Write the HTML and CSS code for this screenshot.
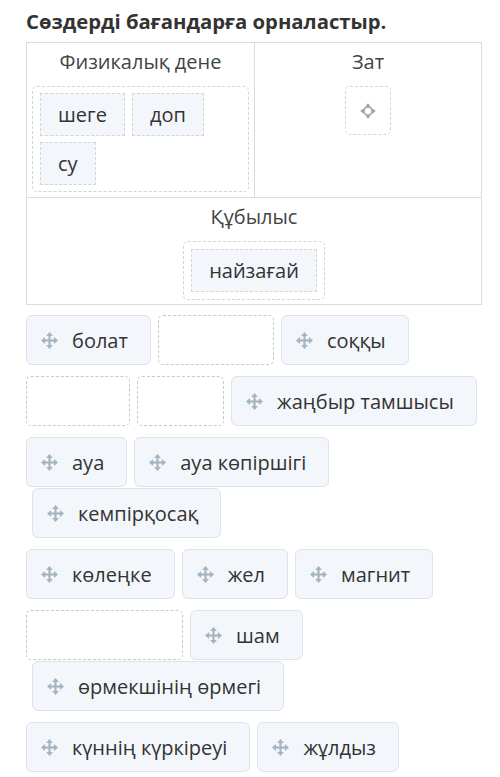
FILE: index.html
```html
<!DOCTYPE html>
<html>
<head>
<meta charset="utf-8">
<link rel="stylesheet" href="styles.css">
</head>
<body>
<svg width="0" height="0" class="defs">
  <defs>
    <symbol id="mv" viewBox="0 0 16 16">
      <rect x="7" y="3" width="2" height="10" />
      <rect x="3" y="7" width="10" height="2" />
      <polygon points="8,0 11.2,3.8 4.8,3.8" />
      <polygon points="8,16 11.2,12.2 4.8,12.2" />
      <polygon points="0,8 3.8,4.8 3.8,11.2" />
      <polygon points="16,8 12.2,4.8 12.2,11.2" />
    </symbol>
  </defs>
</svg>
<div class="page">
  <h1 class="title">Сөздерді бағандарға орналастыр.</h1>
  <div class="table">
    <div class="cell">
      <div class="head">Физикалық дене</div>
      <div class="zone zone-wide">
        <span class="placed">шеге</span>
        <span class="placed">доп</span>
        <span class="placed">су</span>
      </div>
    </div>
    <div class="cell cell-right">
      <div class="head">Зат</div>
      <div class="zone zone-empty">
        <svg class="target" viewBox="0 0 14 14">
          <circle cx="7" cy="7" r="3.6" fill="none" stroke="#9ea6ad" stroke-width="1.6"/>
          <polygon points="7,0.3 9.3,2.9 4.7,2.9" fill="#9ea6ad"/>
          <polygon points="7,13.7 9.3,11.1 4.7,11.1" fill="#9ea6ad"/>
          <polygon points="0.3,7 2.9,4.7 2.9,9.3" fill="#9ea6ad"/>
          <polygon points="13.7,7 11.1,4.7 11.1,9.3" fill="#9ea6ad"/>
        </svg>
      </div>
    </div>
    <div class="cell cell-full">
      <div class="head">Құбылыс</div>
      <div class="zone zone-center">
        <span class="placed">найзағай</span>
      </div>
    </div>
  </div>

  <div class="bank">
    <div class="row">
      <span class="item"><svg class="ic"><use href="#mv"/></svg>болат</span>
      <span class="slot w116"></span>
      <span class="item"><svg class="ic"><use href="#mv"/></svg>соққы</span>
    </div>
    <div class="row">
      <span class="slot w104"></span>
      <span class="slot w87"></span>
      <span class="item"><svg class="ic"><use href="#mv"/></svg>жаңбыр тамшысы</span>
    </div>
    <div class="row row-tight">
      <span class="item"><svg class="ic"><use href="#mv"/></svg>ауа</span>
      <span class="item"><svg class="ic"><use href="#mv"/></svg>ауа көпіршігі</span>
    </div>
    <div class="row row-indent">
      <span class="item"><svg class="ic"><use href="#mv"/></svg>кемпірқосақ</span>
    </div>
    <div class="row">
      <span class="item"><svg class="ic"><use href="#mv"/></svg>көлеңке</span>
      <span class="item"><svg class="ic"><use href="#mv"/></svg>жел</span>
      <span class="item"><svg class="ic"><use href="#mv"/></svg>магнит</span>
    </div>
    <div class="row row-tight">
      <span class="slot w157"></span>
      <span class="item"><svg class="ic"><use href="#mv"/></svg>шам</span>
    </div>
    <div class="row row-indent">
      <span class="item"><svg class="ic"><use href="#mv"/></svg>өрмекшінің өрмегі</span>
    </div>
    <div class="row">
      <span class="item"><svg class="ic"><use href="#mv"/></svg>күннің күркіреуі</span>
      <span class="item"><svg class="ic"><use href="#mv"/></svg>жұлдыз</span>
    </div>
  </div>
</div>
</body>
</html>
```

FILE: styles.css
```css
html, body {
  margin: 0;
  padding: 0;
  background: #ffffff;
}

.defs {
  position: absolute;
  width: 0;
  height: 0;
}

.page {
  padding: 8px 18px 0 26px;
  font-family: "Open Sans", "Noto Sans", sans-serif;
  color: #333;
}

.title {
  margin: 0;
  font-size: 20.3px;
  line-height: 26px;
  font-weight: 700;
  color: #333;
}

.table {
  margin-top: 8px;
  display: grid;
  grid-template-columns: 1fr 1fr;
  border: 1px solid #dcdcdc;
}

.cell {
  padding: 5px 5px 5px;
  display: flex;
  flex-direction: column;
  align-items: center;
}

.cell-right {
  border-left: 1px solid #dcdcdc;
}

.cell-full {
  grid-column: 1 / span 2;
  border-top: 1px solid #dcdcdc;
  padding-bottom: 4px;
}

.head {
  font-size: 20px;
  line-height: 27px;
  color: #444;
  margin-bottom: 11px;
}

.zone {
  border: 1px dashed #d4d4d4;
  border-radius: 5px;
  box-sizing: border-box;
}

.zone-wide {
  align-self: stretch;
  padding: 6px 7px 6px;
  display: flex;
  flex-wrap: wrap;
  gap: 6px 7px;
  min-height: 106px;
  align-content: flex-start;
}

.zone-empty {
  width: 46px;
  height: 49px;
  display: flex;
  align-items: center;
  justify-content: center;
}

.target {
  width: 16px;
  height: 16px;
}

.zone-center {
  padding: 7px;
}

.placed {
  display: inline-block;
  border: 1px dashed #d6d6d6;
  background: #f3f7fb;
  padding: 7px 17px;
  font-size: 20px;
  line-height: 27px;
  color: #333;
}

.bank {
  margin-top: 10px;
  display: flex;
  flex-direction: column;
  gap: 11px;
}

.row {
  display: flex;
  gap: 7px;
}

.row-tight + .row-indent {
  margin-top: -10px;
}

.row-indent {
  padding-left: 6px;
}

.item {
  display: inline-flex;
  align-items: center;
  box-sizing: border-box;
  height: 50px;
  padding: 0 22px 0 14px;
  border: 1px solid #dde3e9;
  border-radius: 6px;
  background: #f3f7fb;
  font-size: 20px;
  line-height: 27px;
  color: #333;
}

.ic {
  width: 17px;
  height: 17px;
  margin-right: 14px;
  fill: #a5b4c0;
}

.slot {
  height: 50px;
  box-sizing: border-box;
  border: 1px dashed #c9c9c9;
  border-radius: 5px;
}

.w116 { width: 116px; }
.w104 { width: 104px; }
.w87 { width: 87px; }
.w157 { width: 157px; }
```
